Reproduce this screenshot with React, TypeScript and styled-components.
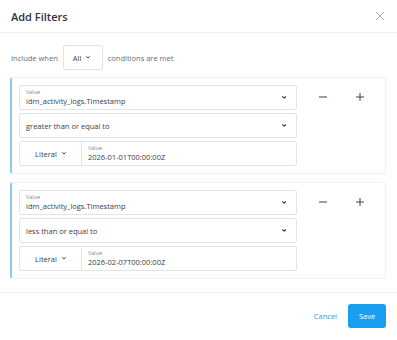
import React from "react";
import styled, { createGlobalStyle } from "styled-components";

const Global = createGlobalStyle`
  html, body { margin: 0; padding: 0; background: #fff; }
  body { font-family: "Open Sans", "Noto Sans", sans-serif; color: #333; }
  * { box-sizing: border-box; }
`;

const Modal = styled.div`
  width: 397px;
  height: 340px;
  display: flex;
  flex-direction: column;
  background: #fff;
`;

const Header = styled.div`
  height: 33px;
  display: flex;
  align-items: center;
  justify-content: space-between;
  padding: 0 12px 0 11px;
  border-bottom: 1px solid #eef0f3;
`;

const Title = styled.div`
  font-size: 11px;
  font-weight: 600;
  color: #2f3440;
`;

const CloseBtn = styled.div`
  width: 10px;
  height: 10px;
  display: flex;
  color: #9aa0a8;
`;

const Body = styled.div`
  padding: 12px 11px 13px 10px;
  display: flex;
  flex-direction: column;
  gap: 8px;
  border-bottom: 1px solid #eef0f3;
`;

const IncludeRow = styled.div`
  display: flex;
  align-items: center;
  gap: 5px;
  font-size: 7.5px;
  color: #666c76;
  padding-left: 1px;
  margin-bottom: -1px;
`;

const SmallSelect = styled.div`
  width: 40px;
  height: 25px;
  border: 1px solid #dfe2e7;
  border-radius: 2px;
  display: flex;
  align-items: center;
  justify-content: space-between;
  padding: 0 12px 0 9px;
  color: #3a404a;
  font-size: 7.5px;
`;

const Card = styled.div`
  display: flex;
  border: 1px solid #eef0f3;
  border-left: 2px solid #8ccaf2;
  border-radius: 3px;
  padding: 7px 0 7px 7px;
  height: 97px;
`;

const Fields = styled.div`
  width: 278px;
  display: flex;
  flex-direction: column;
  gap: 3px;
`;

const Field = styled.div`
  height: 25px;
  border: 1px solid #e1e4e9;
  border-radius: 2px;
  display: flex;
  align-items: center;
  justify-content: space-between;
  padding: 0 10px 0 6px;
`;

const Stack = styled.div`
  display: flex;
  flex-direction: column;
  justify-content: center;
`;

const Label = styled.div`
  font-size: 5.5px;
  color: #80868f;
  line-height: 7px;
`;

const Val = styled.div`
  font-size: 7.5px;
  color: #3a404a;
  line-height: 10px;
`;

const SplitField = styled.div`
  height: 25px;
  border: 1px solid #e1e4e9;
  border-radius: 2px;
  display: flex;
`;

const TypeCell = styled.div`
  width: 62px;
  border-right: 1px solid #e1e4e9;
  display: flex;
  align-items: center;
  justify-content: center;
  gap: 5px;
  font-size: 7.5px;
  color: #3a404a;
`;

const ValueCell = styled.div`
  flex: 1;
  display: flex;
  flex-direction: column;
  justify-content: center;
  padding-left: 6px;
`;

const Actions = styled.div`
  display: flex;
  align-items: flex-start;
  padding-top: 7px;
  padding-left: 21px;
  gap: 27px;
  color: #3a4150;
`;

const IconBtn = styled.div`
  width: 10px;
  height: 10px;
  display: flex;
`;

const Footer = styled.div`
  display: flex;
  justify-content: flex-end;
  align-items: center;
  gap: 11px;
  padding: 11px 11px 0 0;
`;

const CancelBtn = styled.div`
  font-size: 7.5px;
  color: #2a9de8;
`;

const SaveBtn = styled.div`
  width: 38px;
  height: 24px;
  border-radius: 3px;
  background: #1a9ff0;
  color: #fff;
  font-size: 7.5px;
  display: flex;
  align-items: center;
  justify-content: center;
`;

const Chevron = ({ size = 4.5 }: { size?: number }) => (
  <svg width={size} height={size * 0.7} viewBox="0 0 10 7" fill="none">
    <path d="M1.5 1.5 L5 5 L8.5 1.5" stroke="#2f3540" strokeWidth="2.4" strokeLinecap="round" strokeLinejoin="round" />
  </svg>
);

const Minus = () => (
  <svg width="10" height="10" viewBox="0 0 10 10">
    <path d="M1 5 H9" stroke="currentColor" strokeWidth="1" />
  </svg>
);

const Plus = () => (
  <svg width="10" height="10" viewBox="0 0 10 10">
    <path d="M1 5 H9 M5 1 V9" stroke="currentColor" strokeWidth="1" />
  </svg>
);

type Cond = { op: string; date: string };

const conds: Cond[] = [
  { op: "greater than or equal to", date: "2026-01-01T00:00:00Z" },
  { op: "less than or equal to", date: "2026-02-07T00:00:00Z" },
];

const Condition = ({ c }: { c: Cond }) => (
  <Card>
    <Fields>
      <Field>
        <Stack>
          <Label>Value</Label>
          <Val>idm_activity_logs.Timestamp</Val>
        </Stack>
        <Chevron />
      </Field>
      <Field>
        <Val>{c.op}</Val>
        <Chevron />
      </Field>
      <SplitField>
        <TypeCell>
          Literal <Chevron size={4} />
        </TypeCell>
        <ValueCell>
          <Label>Value</Label>
          <Val>{c.date}</Val>
        </ValueCell>
      </SplitField>
    </Fields>
    <Actions>
      <IconBtn><Minus /></IconBtn>
      <IconBtn><Plus /></IconBtn>
    </Actions>
  </Card>
);

export default function App() {
  return (
    <>
      <Global />
      <Modal>
        <Header>
          <Title>Add Filters</Title>
          <CloseBtn>
            <svg width="10" height="10" viewBox="0 0 10 10">
              <path d="M1 1 L9 9 M9 1 L1 9" stroke="currentColor" strokeWidth="0.9" />
            </svg>
          </CloseBtn>
        </Header>
        <Body>
          <IncludeRow>
            Include when
            <SmallSelect>
              All <Chevron size={4} />
            </SmallSelect>
            conditions are met
          </IncludeRow>
          {conds.map((c, i) => (
            <Condition key={i} c={c} />
          ))}
        </Body>
        <Footer>
          <CancelBtn>Cancel</CancelBtn>
          <SaveBtn>Save</SaveBtn>
        </Footer>
      </Modal>
    </>
  );
}
